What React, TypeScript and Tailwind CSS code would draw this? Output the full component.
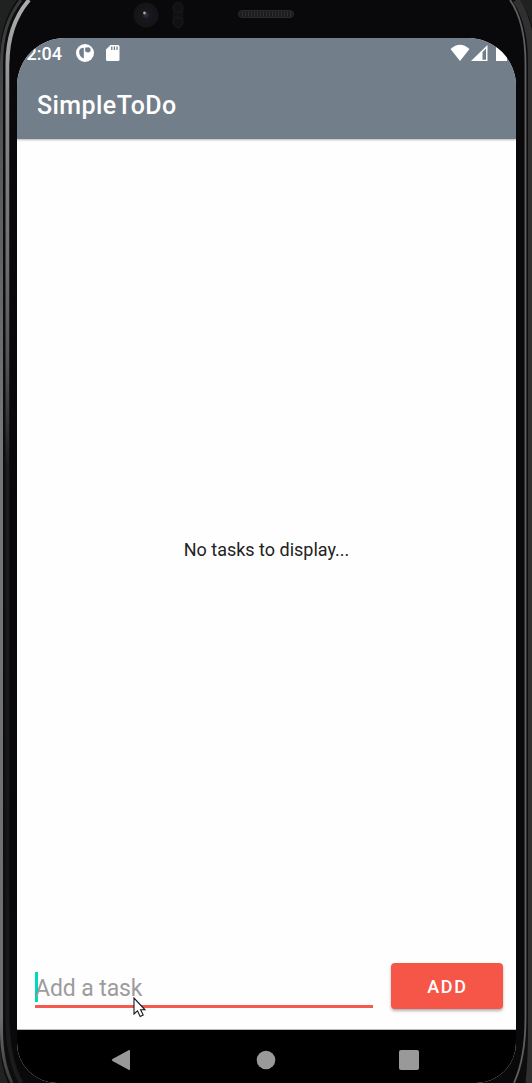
import React from "react";

function PhoneFrame() {
  return (
    <svg className="absolute inset-0 h-[1083px] w-[532px]" viewBox="0 0 532 1083" fill="none" aria-hidden="true">
      <defs>
        <linearGradient id="edge" x1="0" y1="0" x2="0" y2="1083" gradientUnits="userSpaceOnUse">
          <stop offset="0" stopColor="#adadad" />
          <stop offset="0.12" stopColor="#858585" />
          <stop offset="0.25" stopColor="#6c6c6d" />
          <stop offset="0.34" stopColor="#505052" />
          <stop offset="0.43" stopColor="#1d1d1e" />
          <stop offset="0.8" stopColor="#151516" />
          <stop offset="1" stopColor="#1c1c1d" />
        </linearGradient>
        <linearGradient id="outer" x1="0" y1="0" x2="0" y2="1083" gradientUnits="userSpaceOnUse">
          <stop offset="0" stopColor="#343638" />
          <stop offset="0.15" stopColor="#55595b" />
          <stop offset="0.4" stopColor="#75787a" />
          <stop offset="0.94" stopColor="#6b6d6e" />
          <stop offset="1" stopColor="#38393a" />
        </linearGradient>
        <radialGradient id="lens">
          <stop offset="0" stopColor="#303445" />
          <stop offset="0.55" stopColor="#15151c" />
          <stop offset="1" stopColor="#18181a" />
        </radialGradient>
      </defs>
      <rect width="532" height="1083" fill="#202222" />
      <path d="M17 0Q0 22 0 58V1040Q0 1065 8 1083H526Q532 1065 532 1040V26Q528 12 520 0Z" fill="#0d0d0e" />
      <path d="M21 0Q1.5 24 1.5 64V1030Q1.5 1062 12 1083" stroke="url(#outer)" strokeWidth="3" />
      <path d="M529 1083Q531.5 1060 531.5 1030V60Q531 22 516 0" stroke="#303031" strokeWidth="7" />
      <path d="M29 0Q7.5 25 7.5 64V1018Q8 1060 21 1083" stroke="url(#edge)" strokeWidth="4" />
      <path d="M510 0Q525.5 22 525.5 64V1018Q525.5 1058 514 1083" stroke="#5e5e5f" strokeWidth="1.8" />
      <path d="M32 0Q11 26 9.5 66V1018Q10 1060 25 1083H512Q524 1056 524 1018V64Q524 22 508 0Z" fill="#09090b" />
      <circle cx="146" cy="15" r="12.5" fill="#151517" />
      <circle cx="146" cy="15" r="8" fill="url(#lens)" />
      <circle cx="144.5" cy="13" r="1.4" fill="#aaa497" />
      <rect x="172.5" y="2" width="11" height="25" rx="5.5" fill="#111113" />
      <circle cx="178" cy="7.5" r="5" stroke="#1b1b1d" />
      <circle cx="178" cy="22.5" r="5" stroke="#1b1b1d" />
      <rect x="238.5" y="10.5" width="55" height="7" rx="3.5" fill="#1c1c1d" stroke="#292929" />
      <path d="M242 14H291" stroke="#303030" strokeWidth="5" strokeDasharray="1 2" />
    </svg>
  );
}

function StatusBar() {
  return (
    <div className="flex h-[30px] items-center pl-[7.5px] text-white">
      <span className="w-[46px] shrink-0 pt-[1px] pl-[2px] text-[18px] leading-[30px] font-medium">2:04</span>
      <svg className="ml-[4px] h-[20px] w-[20px]" viewBox="0 0 20 20">
        <circle cx="10" cy="10" r="9" fill="currentColor" />
        <path d="M8.8 4.8V15.5C5.8 14.8 4.2 12 4.2 9Q4.2 4.8 8.8 4.8Z" fill="#727e89" />
        <path d="M10.3 4.5H11.5V8.5H10.3Z" fill="#727e89" />
        <circle cx="13" cy="6.8" r="2.6" fill="#727e89" />
      </svg>
      <svg className="ml-[10px] h-[18px] w-[16px]" viewBox="0 0 16 18">
        <path d="M5.5 1H13Q14.5 1 14.5 2.5V15.5Q14.5 17 13 17H2.5Q1 17 1 15.5V5.5Z" fill="currentColor" />
        <path d="M6.8 2.5V6M9.4 2.5V6M12 2.5V6" stroke="#727e89" strokeWidth="1.3" />
      </svg>
      <svg className="ml-auto h-[18px] w-[20px]" viewBox="0 0 20 18">
        <path d="M.5 5Q10-3.5 19.5 5L10 17Z" fill="currentColor" />
      </svg>
      <svg className="ml-[1px] h-[18px] w-[17px]" viewBox="0 0 17 18">
        <path fillRule="evenodd" d="M0 17L16.5 1V17ZM11.5 8V15.7H15V4.5Z" fill="currentColor" />
      </svg>
      <svg className="mr-[9px] ml-[8px] h-[18px] w-[11px]" viewBox="0 0 11 18">
        <path d="M0 3H2V1H9V3H11V17H0Z" fill="currentColor" />
      </svg>
    </div>
  );
}

export default function App() {
  return (
    <div className="relative h-[1083px] w-[532px] overflow-hidden bg-[#09090b] font-[Roboto,sans-serif]">
      <PhoneFrame />
      <main className="relative mt-[38px] ml-[17px] flex h-[1045px] w-[499px] flex-col overflow-hidden rounded-t-[48px] rounded-b-[40px] bg-[#fefefe]">
        <header className="z-10 flex h-[101px] shrink-0 flex-col bg-[#727e89] shadow-[0_1px_2px_rgba(0,0,0,0.28)]">
          <StatusBar />
          <h1 className="pt-[20px] pl-[20px] text-[25px] leading-[36px] font-medium tracking-[0.43px] text-white">SimpleToDo</h1>
        </header>
        <section className="flex min-h-0 grow items-center justify-center pb-[2px] text-[18px] text-[#222]">
          <p>No tasks to display...</p>
        </section>
        <form className="flex h-[69px] shrink-0 items-start border-b border-[#b4bbb8] pr-[13.5px] pl-[17.5px]" onSubmit={(event) => event.preventDefault()}>
          <div className="relative mt-[11px] flex h-[36px] w-[338px] items-start border-b-[3px] border-[#f65a4c]">
            <span className="h-[30px] w-[3px] bg-[#00d9bf]" />
            <label className="-ml-[2.5px] pt-[1px] text-[23px] leading-[32px] tracking-[-0.1px] text-[#9c9c9c]">Add a task</label>
            <svg className="absolute top-[25px] left-[98px] h-[21px] w-[14px]" viewBox="0 0 14 21">
              <path d="M1 1V17L4.5 13.8L7.2 19.6L10.2 18L7.6 12.8H12Z" fill="white" stroke="#16161e" strokeWidth="1.1" />
            </svg>
          </div>
          <button className="mt-[2px] ml-auto h-[46px] w-[112px] rounded-[4px] bg-[#f65648] pl-[2px] text-[18px] font-medium tracking-[1.7px] text-white shadow-[0_2px_3px_rgba(0,0,0,0.3)]">ADD</button>
        </form>
        <nav className="flex h-[53px] shrink-0 items-center bg-black pt-[7px] text-[#999]">
          <svg className="ml-[93.5px] h-[22px] w-[20px]" viewBox="0 0 20 22"><path d="M18 1Q19 .5 19 2V20Q19 21.5 18 21L1.5 12Q0 11 1.5 10Z" fill="currentColor" /></svg>
          <svg className="ml-[125.5px] h-[20px] w-[20px]" viewBox="0 0 20 20"><circle cx="10" cy="10" r="9.3" fill="currentColor" /></svg>
          <svg className="ml-[123px] h-[20px] w-[20px]" viewBox="0 0 20 20"><rect width="20" height="20" rx="2" fill="currentColor" /></svg>
        </nav>
      </main>
    </div>
  );
}
